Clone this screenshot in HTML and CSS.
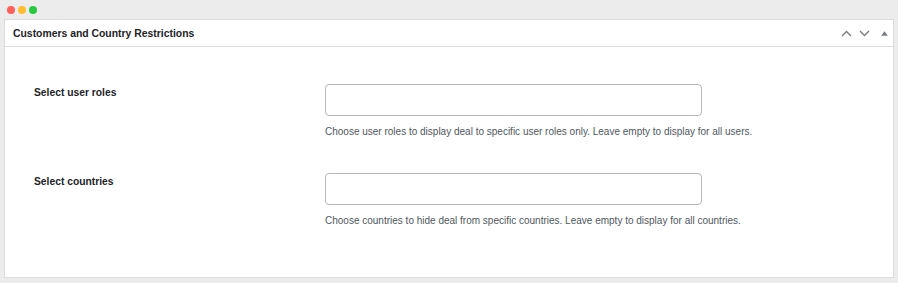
FILE: index.html
```html
<!DOCTYPE html>
<html lang="en">
<head>
  <meta charset="UTF-8" />
  <title>Customers and Country Restrictions</title>
  <link rel="stylesheet" href="styles.css">
</head>
<body>
  <div class="titlebar">
    <span class="dot red"></span>
    <span class="dot yellow"></span>
    <span class="dot green"></span>
  </div>

  <div class="postbox">
    <div class="postbox-header">
      <h2>Customers and Country Restrictions</h2>
      <div class="handle-actions">
        <button class="handle" aria-label="Move up">
          <svg width="11" height="7" viewBox="0 0 11 7"><path d="M1 6 L5.5 1.5 L10 6" /></svg>
        </button>
        <button class="handle" aria-label="Move down">
          <svg width="11" height="7" viewBox="0 0 11 7"><path d="M1 1 L5.5 5.5 L10 1" /></svg>
        </button>
        <button class="handle toggle" aria-label="Toggle panel">
          <svg width="7" height="5" viewBox="0 0 7 5"><polygon points="3.5,0.3 6.8,4.7 0.2,4.7" /></svg>
        </button>
      </div>
    </div>

    <div class="inside">
      <div class="field">
        <label for="roles">Select user roles</label>
        <div class="control">
          <input type="text" id="roles" />
          <p class="description">Choose user roles to display deal to specific user roles only. Leave empty to display for all users.</p>
        </div>
      </div>

      <div class="field">
        <label for="countries">Select countries</label>
        <div class="control">
          <input type="text" id="countries" />
          <p class="description">Choose countries to hide deal from specific countries. Leave empty to display for all countries.</p>
        </div>
      </div>
    </div>
  </div>
</body>
</html>
```

FILE: styles.css
```css
* {
  box-sizing: border-box;
}

body {
  margin: 0;
  padding: 0 4px;
  background: #ececec;
  font-family: 'Liberation Sans', Arial, sans-serif;
  color: #1d2327;
  height: 283px;
}

.titlebar {
  height: 19px;
  display: flex;
  align-items: center;
  gap: 3px;
  padding-left: 3px;
}

.dot {
  width: 8px;
  height: 8px;
  border-radius: 50%;
}

.red { background: #fe5f57; }
.yellow { background: #febc2e; }
.green { background: #28c840; }

.postbox {
  background: #fff;
  border: 1px solid #dcdcde;
  height: 259px;
}

.postbox-header {
  height: 27px;
  display: flex;
  align-items: center;
  justify-content: space-between;
  border-bottom: 1px solid #dcdcde;
  padding-left: 8px;
}

.postbox-header h2 {
  margin: 0;
  font-size: 10.4px;
  font-weight: bold;
}

.handle-actions {
  display: flex;
  align-items: center;
}

.handle {
  background: none;
  border: none;
  padding: 0;
  width: 18px;
  height: 24px;
  display: flex;
  align-items: center;
  justify-content: center;
}

.handle path {
  fill: none;
  stroke: #787c82;
  stroke-width: 1.4;
}

.handle polygon {
  fill: #787c82;
}

.toggle {
  margin-left: 2px;
}

.inside {
  padding: 37px 0 0 29px;
}

.field {
  display: grid;
  grid-template-columns: 291px 1fr;
  margin-bottom: 33px;
}

.field label {
  font-size: 10.3px;
  font-weight: bold;
  line-height: 16px;
  padding-top: 1px;
}

.control input {
  display: block;
  width: 377px;
  height: 32px;
  border: 1px solid #b4b7ba;
  border-radius: 4px;
  background: #fff;
}

.description {
  margin: 8px 0 0;
  font-size: 10px;
  line-height: 16px;
  color: #50575e;
}
```
